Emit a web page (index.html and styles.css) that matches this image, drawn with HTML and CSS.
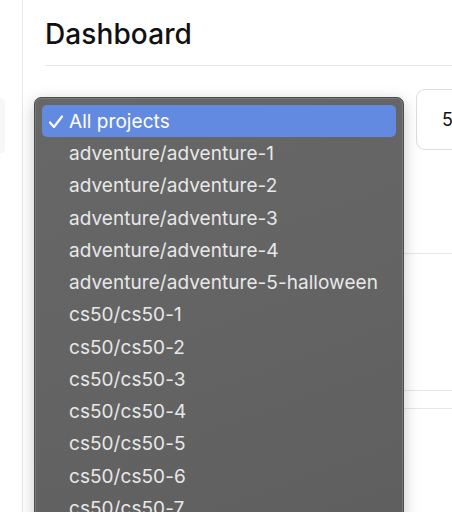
FILE: index.html
```html
<!DOCTYPE html>
<html>
<head>
<meta charset="utf-8">
<link rel="stylesheet" href="styles.css">
</head>
<body>
<div class="page">
  <aside class="sidebar">
    <div class="side-box"></div>
  </aside>
  <main class="main">
    <h1 class="title">Dashboard</h1>
    <div class="filters">
      <div class="select-slot"></div>
      <div class="count-box">5</div>
    </div>
    <div class="section s1"></div>
    <div class="section s2"></div>
    <div class="section s3"></div>
  </main>
  <div class="menu">
    <div class="item selected"><svg class="check" width="16" height="14" viewBox="0 0 16 14"><path d="M2 7.5 L6 12 L14 1.5" fill="none" stroke="#ffffff" stroke-width="2.2" stroke-linecap="round" stroke-linejoin="round"/></svg>All projects</div>
    <div class="item">adventure/adventure-1</div>
    <div class="item">adventure/adventure-2</div>
    <div class="item">adventure/adventure-3</div>
    <div class="item">adventure/adventure-4</div>
    <div class="item">adventure/adventure-5-halloween</div>
    <div class="item">cs50/cs50-1</div>
    <div class="item">cs50/cs50-2</div>
    <div class="item">cs50/cs50-3</div>
    <div class="item">cs50/cs50-4</div>
    <div class="item">cs50/cs50-5</div>
    <div class="item">cs50/cs50-6</div>
    <div class="item">cs50/cs50-7</div>
  </div>
</div>
</body>
</html>
```
FILE: styles.css
```css
html, body {
  margin: 0;
  padding: 0;
  background: #ffffff;
  font-family: Inter, "Liberation Sans", sans-serif;
  overflow: hidden;
}
.page {
  position: relative;
  display: flex;
  width: 452px;
  height: 512px;
  overflow: hidden;
}
.sidebar {
  width: 23px;
  flex: none;
  border-right: 1px solid #e6e8ee;
  padding-top: 98px;
  box-sizing: border-box;
}
.side-box {
  width: 5px;
  height: 56px;
  background: #f6f7f8;
  border-radius: 0 6px 6px 0;
}
.main {
  flex: 1;
  padding-left: 22px;
  min-width: 0;
}
.title {
  margin: 0;
  height: 66px;
  box-sizing: border-box;
  padding-top: 17px;
  font-size: 28px;
  font-weight: 500;
  color: #111;
  border-bottom: 1px solid #e5e7eb;
  line-height: 34px;
  letter-spacing: 0.1px;
}
.filters {
  display: flex;
  gap: 13px;
  margin-top: 23px;
  margin-left: -12px;
}
.select-slot {
  width: 370px;
  height: 61px;
  flex: none;
}
.count-box {
  flex: none;
  width: 60px;
  height: 61px;
  box-sizing: border-box;
  border: 1px solid #dcdde1;
  border-radius: 9px;
  padding-left: 25px;
  font-size: 18px;
  line-height: 59px;
  color: #111;
}
.section {
  border-bottom: 1px solid #e6e7eb;
}
.s1 { height: 103px; }
.s2 { height: 136px; }
.s3 { height: 17px; }
.menu {
  position: absolute;
  left: 34px;
  top: 97px;
  width: 370px;
  height: 440px;
  box-sizing: border-box;
  padding: 7px 7px;
  background: linear-gradient(160deg, #676767 0%, #636363 60%, #5e5e5e 100%);
  border: 1px solid #4c4c4c;
  border-radius: 7px;
  box-shadow: inset 0 0 0 1px #7a7a7a, 0 4px 16px rgba(0,0,0,0.22);
}
.item {
  height: 32.27px;
  line-height: 34px;
  padding-left: 27px;
  font-size: 19px;
  color: #e8e8e8;
  white-space: nowrap;
  position: relative;
  border-radius: 5px;
  letter-spacing: 0.05px;
}
.item.selected {
  background: #628ae0;
  color: #ffffff;
  height: 32px;
}
.check {
  position: absolute;
  left: 6px;
  top: 10px;
}
```
